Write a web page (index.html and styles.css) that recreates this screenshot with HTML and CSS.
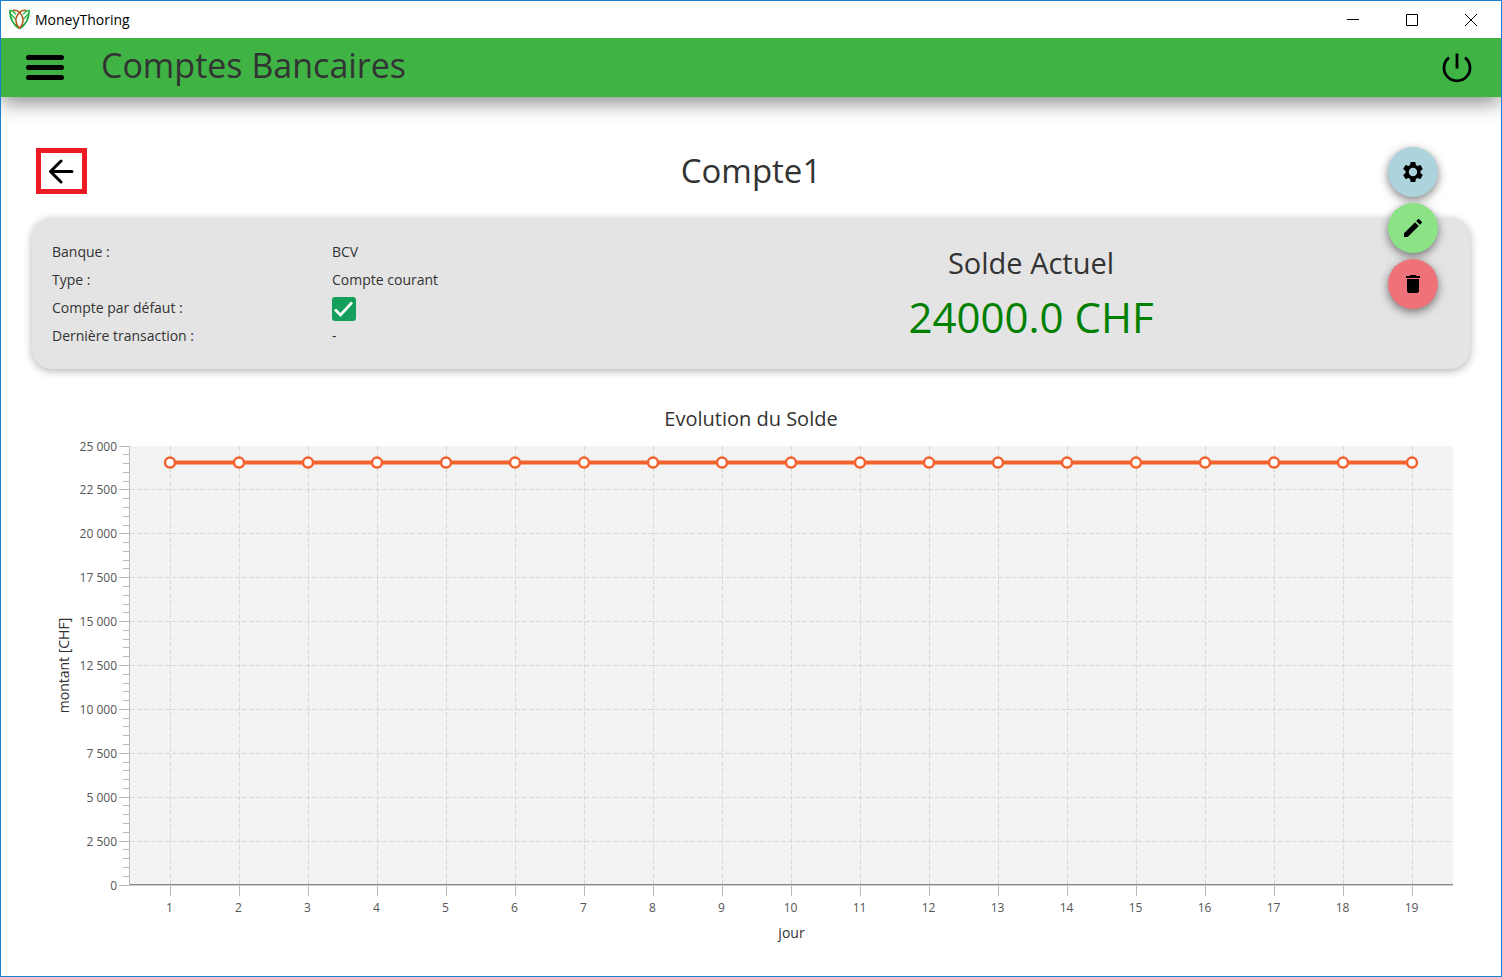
FILE: index.html
```html
<!DOCTYPE html>
<html lang="fr">
<head>
<meta charset="utf-8">
<meta name="viewport" content="width=device-width, initial-scale=1">
<title>MoneyThoring</title>
<link rel="stylesheet" href="styles.css">
</head>
<body>
<div class="window">
  <div class="titlebar">
    <svg class="logo" viewBox="0 0 20 20" width="21" height="21" fill="none" aria-hidden="true">
      <path d="M1 1C.5 8 3 14 9.500 18.500M19 1c.5 7-2 13-8.500 17.500" stroke="#12a537" stroke-width="1.600"/>
      <path d="M1 1.200C3.500 1.600 5 3 6.500 5M19 1.200C16.500 1.600 15 3 13.500 5M2 5l4.500 5M18 5l-4.500 5" stroke="#2fc04b" stroke-width="1.400"/>
      <path d="M3.500 1.200C8 .6 10 2.500 11.800 5.500c2.600 4 1.600 9-1.800 13M16.500 1.200C12 .6 10 2.500 8.200 5.500c-2.600 4-1.600 9 1.800 13" stroke="#b05a1e" stroke-width="1.400"/>
    </svg>
    <span class="app-name">MoneyThoring</span>
    <div class="window-controls">
      <button type="button" aria-label="Réduire"><svg width="14" height="14" viewBox="0 0 14 14"><path d="M1 6.500h12" stroke="#000"/></svg></button>
      <button type="button" aria-label="Agrandir"><svg width="14" height="14" viewBox="0 0 14 14" fill="none"><path d="M1.500 1.500h11v11h-11z" stroke="#000"/></svg></button>
      <button type="button" aria-label="Fermer"><svg width="14" height="14" viewBox="0 0 14 14"><path d="M1 1l12 12M13 1L1 13" stroke="#000"/></svg></button>
    </div>
  </div>

  <header class="appbar">
    <button type="button" class="menu-button" aria-label="Menu">
      <svg width="38" height="26" viewBox="0 0 38 26"><path d="M2.500 2.500h33M2.500 12.500h33M2.500 22.500h33" stroke="#000" stroke-width="5" stroke-linecap="round"/></svg>
    </button>
    <h1>Comptes Bancaires</h1>
    <button type="button" class="power-button" aria-label="Déconnexion">
      <svg width="30" height="30" viewBox="0 0 30 30" fill="none" stroke="#000" stroke-width="2.800"><path d="M15 .5v15M7 4.600a13 13 0 1 0 16 0"/></svg>
    </button>
  </header>

  <main>
    <div class="account-bar">
      <button type="button" class="back" aria-label="Retour">
        <svg width="26" height="26" viewBox="0 0 26 26" fill="none" stroke="#000" stroke-width="3" stroke-linecap="round" stroke-linejoin="round"><path d="M23 13.500H2.500M12 3L1.500 13.500 12 24"/></svg>
      </button>
      <h2>Compte1</h2>
    </div>

    <section class="card">
      <dl class="details">
        <dt>Banque :</dt><dd>BCV</dd>
        <dt>Type :</dt><dd>Compte courant</dd>
        <dt><label for="default-account">Compte par défaut :</label></dt>
        <dd class="check">
          <input type="checkbox" id="default-account" checked>
          <svg width="24" height="24" viewBox="0 0 24 24" fill="none" aria-hidden="true"><path d="M3 12.500L8.500 18 20 5.500" stroke="#fff" stroke-width="2.600"/></svg>
        </dd>
        <dt>Dernière transaction :</dt><dd>-</dd>
      </dl>
      <div class="balance">
        <p class="balance-label">Solde Actuel</p>
        <p class="balance-value">24000.0 CHF</p>
      </div>
    </section>

    <div class="actions">
      <button type="button" class="fab settings" aria-label="Paramètres"><svg width="24" height="24" viewBox="0 0 24 24"><path d="M19.430 12.980c.04-.32.070-.64.070-.98s-.03-.66-.07-.98l2.110-1.650c.19-.15.240-.42.120-.64l-2-3.460c-.12-.22-.39-.3-.61-.22l-2.490 1c-.52-.4-1.080-.73-1.690-.98l-.38-2.650A.488.488 0 0 0 14 2h-4c-.25 0-.46.180-.49.420l-.38 2.650c-.61.250-1.170.590-1.690.980l-2.490-1c-.23-.09-.49 0-.61.220l-2 3.460c-.13.220-.07.490.120.640l2.110 1.650c-.04.320-.07.650-.07.980s.03.660.070.980l-2.110 1.650c-.19.150-.24.420-.12.640l2 3.460c.12.220.39.300.61.220l2.490-1c.52.400 1.080.730 1.690.980l.38 2.650c.03.240.24.420.49.420h4c.25 0 .46-.18.490-.42l.38-2.650c.61-.25 1.170-.59 1.690-.98l2.490 1c.23.090.49 0 .61-.22l2-3.460c.12-.22.070-.49-.12-.64l-2.110-1.650zM12 16.200a4.200 4.200 0 1 1 0-8.400 4.200 4.200 0 0 1 0 8.400z"/></svg></button>
      <button type="button" class="fab edit" aria-label="Modifier"><svg width="24" height="24" viewBox="0 0 24 24"><path d="M3 17.250V21h3.750L17.810 9.940l-3.750-3.750L3 17.250zM20.710 7.040a1 1 0 0 0 0-1.410l-2.340-2.340a1 1 0 0 0-1.410 0l-1.830 1.830 3.750 3.750 1.830-1.830z"/></svg></button>
      <button type="button" class="fab delete" aria-label="Supprimer"><svg width="24" height="24" viewBox="0 0 24 24"><path d="M6 19c0 1.100.9 2 2 2h8c1.100 0 2-.9 2-2V7H6v12zM19 4h-3.500l-1-1h-5l-1 1H5v2h14V4z"/></svg></button>
    </div>

    <section class="chart">
      <h3>Evolution du Solde</h3>
      <div class="plot"><svg id="balance-chart" role="img" aria-label="Evolution du Solde"></svg></div>
    </section>
  </main>
</div>
<script src="chart.js"></script>
</body>
</html>
```
FILE: styles.css
```css
* { box-sizing: border-box; }

body {
  margin: 0;
  font-family: "Open Sans", "Noto Sans", sans-serif;
  font-size: 14px;
  color: #333;
}

h1, h2, h3, p, dl, dd { margin: 0; font-weight: 400; }

button {
  display: flex;
  align-items: center;
  justify-content: center;
  padding: 0;
  border: 0;
  background: none;
  cursor: pointer;
}

.window {
  display: flex;
  flex-direction: column;
  min-height: 100vh;
  border: 1px solid #1a80d2;
  overflow: hidden;
  background: #fff;
}

.titlebar {
  position: relative;
  z-index: 1;
  display: flex;
  align-items: center;
  height: 37px;
  padding: 0 1px 0 8px;
  gap: 5px;
  background: #fff;
  color: #000;
}

.window-controls { display: flex; margin-left: auto; height: 100%; }
.window-controls button { width: 59px; }

.appbar {
  display: flex;
  align-items: center;
  height: 59px;
  padding: 0 29px 0 25px;
  background: #3fb344;
  box-shadow: 0 6px 20px rgba(0, 0, 0, .45);
}

.appbar h1 {
  margin-left: 37px;
  padding-bottom: 6px;
  font-size: 34px;
  line-height: 48px;
}

.power-button { margin-left: auto; }

main {
  position: relative;
  display: flex;
  flex: 1;
  flex-direction: column;
  padding: 50px 31px 26px;
}

.account-bar {
  display: grid;
  grid-template-columns: 1fr auto 1fr;
  align-items: center;
  height: 48px;
  margin-bottom: 23px;
}

.account-bar h2 { font-size: 33px; line-height: 48px; }

.back {
  width: 51px;
  height: 46px;
  margin-left: 4px;
  border: 5px solid #ed1c24;
}

.card {
  display: flex;
  padding: 20px 20px 19px;
  border-radius: 20px;
  background: #e4e4e4;
  box-shadow: 0 2px 8px rgba(0, 0, 0, .3);
}

.details {
  display: grid;
  grid-template-columns: 280px 280px;
  grid-auto-rows: 28px;
  line-height: 28px;
}

.check { display: grid; justify-content: start; align-content: center; padding-top: 2px; }
.check input, .check svg { grid-area: 1 / 1; width: 24px; height: 24px; margin: 0; }
.check input { appearance: none; border-radius: 3px; background: #159f5c; }
.check svg { pointer-events: none; z-index: 1; }

.balance { flex: 1; text-align: center; }
.balance-label { font-size: 29px; line-height: 50px; }
.balance-value { font-size: 42px; line-height: 58px; color: #008000; }

.actions {
  position: absolute;
  top: 50px;
  right: 63px;
  display: flex;
  flex-direction: column;
  gap: 6px;
}

.fab {
  width: 50px;
  height: 50px;
  border-radius: 50%;
  box-shadow: 0 3px 10px rgba(0, 0, 0, .5);
}

.settings { background: #add3dc; }
.edit { background: #8be385; }
.delete { background: #ef7278; }

.chart { display: flex; flex: 1; flex-direction: column; margin-top: 35px; }
.chart h3 { font-size: 20px; line-height: 30px; text-align: center; }

.plot { position: relative; flex: 1; min-height: 300px; }
.plot svg { position: absolute; inset: 0; width: 100%; height: 100%; }

.plot-area { fill: #f3f3f3; }
.grid { stroke: #d8d8d8; stroke-dasharray: 5 2; }
.tick { stroke: #b8b8b8; }
.y-axis { stroke: #b8b8b8; }
.x-axis { stroke: #888; }
.x-axis-edge { stroke: #ccc; }
.tick-label { font-size: 12px; fill: #555; }
.axis-label { font-size: 14px; fill: #333; text-anchor: middle; }
.middle { text-anchor: middle; }
.end { text-anchor: end; }
.series { stroke: #f3622d; stroke-width: 4; }
.point { fill: #fff; stroke: #f3622d; stroke-width: 2.5; }
```
FILE: chart.js
```js
const svg = document.getElementById('balance-chart');
const values = Array(19).fill(24000);
const maxValue = 25000;
const majorStep = 2500;
const minorStep = 500;
const margin = { top: 12, right: 17, bottom: 65, left: 98 };
const inset = 40;

function add(name, attributes, text) {
  const node = document.createElementNS('http://www.w3.org/2000/svg', name);
  for (const key in attributes) node.setAttribute(key, attributes[key]);
  if (text !== undefined) node.textContent = text;
  svg.appendChild(node);
}

function line(cls, x1, y1, x2, y2) {
  add('line', { class: cls, x1, y1, x2, y2 });
}

function draw() {
  svg.replaceChildren();
  const left = margin.left;
  const right = svg.clientWidth - margin.right;
  const top = margin.top;
  const bottom = svg.clientHeight - margin.bottom;
  const x = i => left + inset + i * (right - left - 2 * inset - 1) / (values.length - 1);
  const y = v => bottom - v * (bottom - top) / maxValue;
  const crisp = n => Math.floor(n) + 0.5;

  add('rect', { class: 'plot-area', x: left, y: top, width: right - left, height: bottom - top });

  for (let v = 0; v <= maxValue; v += minorStep) {
    const major = v % majorStep === 0;
    const py = crisp(y(v));
    line('tick', left - (major ? 11 : 7), py, left, py);
    if (major) {
      if (v > 0 && v < maxValue) line('grid', left, py, right, py);
      const label = String(v).replace(/(\d)(\d{3})$/, '$1 $2');
      add('text', { class: 'tick-label end', x: left - 13, y: py + 4 }, label);
    }
  }

  values.forEach((_, i) => {
    const px = crisp(x(i));
    line('grid', px, top, px, bottom);
    line('tick', px, bottom, px, bottom + 11);
    add('text', { class: 'tick-label middle', x: px - 1, y: bottom + 27 }, i + 1);
  });

  line('y-axis', left - 0.5, top, left - 0.5, bottom);
  line('x-axis', left, bottom - 0.5, right, bottom - 0.5);
  line('x-axis-edge', left, bottom + 0.5, right, bottom + 0.5);

  line('series', x(0), y(values[0]) - 1, x(values.length - 1), y(values[values.length - 1]) - 1);
  values.forEach((v, i) => add('circle', { class: 'point', cx: x(i), cy: y(v) - 1, r: 5 }));

  const middle = (left + right) / 2;
  const center = (top + bottom) / 2;
  add('text', { class: 'axis-label', x: middle, y: bottom + 53 }, 'jour');
  add('text', { class: 'axis-label', transform: `translate(37 ${center}) rotate(-90)` }, 'montant [CHF]');
}

new ResizeObserver(draw).observe(svg);
draw();
```
